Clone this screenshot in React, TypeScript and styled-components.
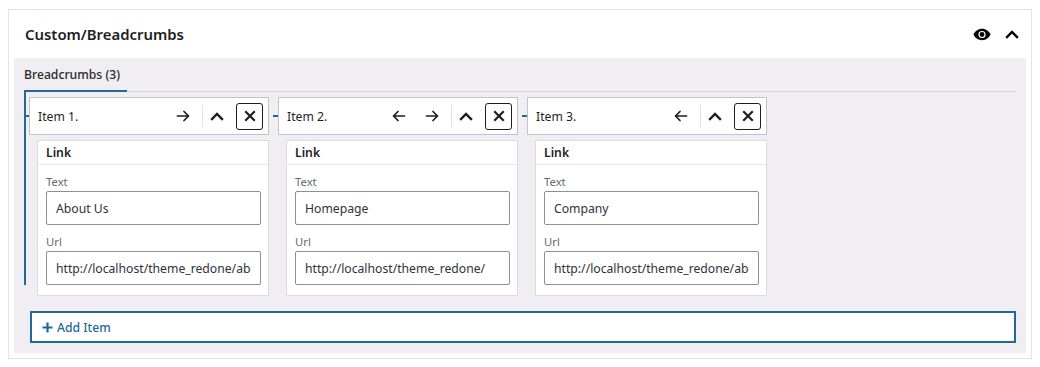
import React from "react";
import styled, { createGlobalStyle } from "styled-components";

const GlobalStyle = createGlobalStyle`
  html, body { margin: 0; padding: 0; background: #ffffff; }
  body { font-family: "Noto Sans", "Open Sans", sans-serif; color: #1e1e1e; }
  * { box-sizing: border-box; }
`;

const BLUE = "#1f6a96";

const Page = styled.div`
  padding: 9px 8px 0 8px;
  width: 1040px;
`;

const Card = styled.section`
  width: 1024px;
  height: 350px;
  border: 1px solid #e4e4e7;
  background: #fff;
  display: flex;
  flex-direction: column;
`;

const CardHeader = styled.header`
  height: 48px;
  display: flex;
  align-items: center;
  padding: 0 12px 0 16px;
`;

const Title = styled.h2`
  margin: 0;
  flex: 1;
  font-size: 14.9px;
  font-weight: 600;
  color: #1e1e1e;
`;

const HeaderTools = styled.div`
  display: flex;
  align-items: center;
  gap: 14px;
  color: #000;
`;

const Panel = styled.div`
  flex: 1;
  margin: 0 5px 5px 5px;
  background: #f0edf3;
  padding: 0 10px 10px 10px;
  display: flex;
  flex-direction: column;
`;

const TabBar = styled.div`
  display: flex;
  border-bottom: 1px solid #d6d3da;
  height: 34px;
`;

const Tab = styled.div<{ $active?: boolean }>`
  width: 103px;
  font-size: 12.2px;
  font-weight: 500;
  color: #2c2c2c;
  display: flex;
  align-items: center;
  border-bottom: 2px solid ${(p) => (p.$active ? BLUE : "transparent")};
  margin-bottom: -1px;
`;

const ItemsRow = styled.div`
  position: relative;
  display: flex;
  gap: 4px;
  padding-top: 5px;
  &::before {
    content: "";
    position: absolute;
    left: 0;
    top: 0;
    width: 2px;
    bottom: 11px;
    background: ${BLUE};
  }
`;

const ItemColumn = styled.div`
  width: 245px;
  display: flex;
  flex-direction: column;
  gap: 5px;
`;

const ItemHeaderRow = styled.div`
  display: flex;
  align-items: center;
`;

const Connector = styled.span`
  width: 5px;
  height: 2px;
  background: ${BLUE};
  flex: none;
`;

const ItemHeader = styled.div`
  flex: 1;
  height: 38px;
  background: #fff;
  border: 1px solid #c3c4c7;
  display: flex;
  align-items: center;
  padding: 0 5px 0 8px;
`;

const ItemTitle = styled.span`
  flex: 1;
  font-size: 12.2px;
  color: #1e1e1e;
`;

const Actions = styled.div`
  display: flex;
  align-items: center;
  gap: 5px;
`;

const IconButton = styled.button<{ $boxed?: boolean }>`
  width: ${(p) => (p.$boxed ? "27px" : "28px")};
  height: 27px;
  padding: 0;
  display: flex;
  align-items: center;
  justify-content: center;
  background: #fff;
  color: #1e1e1e;
  border: ${(p) => (p.$boxed ? "1px solid #1e1e1e" : "none")};
  border-radius: 3px;
  cursor: pointer;
`;

const Sep = styled.span`
  width: 1px;
  height: 22px;
  margin-right: -5px;
  background: #e2e2e2;
`;

const ItemBody = styled.div`
  margin-left: 13px;
  background: #fff;
  border: 1px solid #dcdcde;
  display: flex;
  flex-direction: column;
`;

const BodyTitle = styled.div`
  height: 24px;
  padding: 0 8px;
  display: flex;
  align-items: center;
  font-size: 12.2px;
  font-weight: 600;
  color: #1e1e1e;
  border-bottom: 1px solid #e6e6e6;
`;

const Fields = styled.div`
  padding: 8px 7px 10px 8px;
  display: flex;
  flex-direction: column;
`;

const Label = styled.label`
  font-size: 11.3px;
  color: #6a6a6a;
  line-height: 17px;
  margin-bottom: 1px;
`;

const Input = styled.input`
  height: 34px;
  width: 100%;
  border: 1px solid #8c8f94;
  border-radius: 2px;
  padding: 0 9px;
  font-family: inherit;
  font-size: 12.2px;
  color: #2c3338;
  background: #fff;
  outline: none;
  margin: 0 0 8px 0;
  &:last-child { margin-bottom: 0; }
`;

const AddButton = styled.button`
  margin: 15px 0 0 6px;
  height: 32px;
  border: 2px solid ${BLUE};
  background: #fff;
  color: ${BLUE};
  font-family: inherit;
  font-size: 12.2px;
  font-weight: 500;
  display: flex;
  align-items: center;
  gap: 4px;
  padding: 0 10px;
  cursor: pointer;
`;

const ArrowRight = () => (
  <svg width="14" height="14" viewBox="0 0 14 14" fill="none" stroke="currentColor" strokeWidth="1.7" strokeLinecap="round" strokeLinejoin="round">
    <path d="M1.5 7h11M8 2.5 12.5 7 8 11.5" />
  </svg>
);
const ArrowLeft = () => (
  <svg width="14" height="14" viewBox="0 0 14 14" fill="none" stroke="currentColor" strokeWidth="1.7" strokeLinecap="round" strokeLinejoin="round">
    <path d="M12.5 7h-11M6 2.5 1.5 7 6 11.5" />
  </svg>
);
const ChevronUp = () => (
  <svg width="14" height="10" viewBox="0 0 14 10" fill="none" stroke="currentColor" strokeWidth="2.4" strokeLinecap="square">
    <path d="M2 8 7 3l5 5" />
  </svg>
);
const Close = () => (
  <svg width="12" height="12" viewBox="0 0 12 12" fill="none" stroke="currentColor" strokeWidth="2.2" strokeLinecap="square">
    <path d="M2 2l8 8M10 2 2 10" />
  </svg>
);
const Eye = () => (
  <svg width="18" height="13" viewBox="0 0 18 13">
    <path d="M9 0.8C5 0.8 1.8 3.4 0.6 6.5 1.8 9.6 5 12.2 9 12.2s7.2-2.6 8.4-5.7C16.2 3.4 13 0.8 9 0.8z" fill="#000" />
    <circle cx="9" cy="6.5" r="3.6" fill="#fff" />
    <circle cx="9" cy="6.5" r="2.4" fill="#000" />
  </svg>
);
const Plus = () => (
  <svg width="11" height="11" viewBox="0 0 11 11" fill="none" stroke="currentColor" strokeWidth="2.2">
    <path d="M5.5 0.5v10M0.5 5.5h10" />
  </svg>
);

type Item = { title: string; text: string; url: string; left: boolean; right: boolean };

const items: Item[] = [
  { title: "Item 1.", text: "About Us", url: "http://localhost/theme_redone/about-us/", left: false, right: true },
  { title: "Item 2.", text: "Homepage", url: "http://localhost/theme_redone/", left: true, right: true },
  { title: "Item 3.", text: "Company", url: "http://localhost/theme_redone/about-us/company/", left: true, right: false },
];

export default function App() {
  return (
    <>
      <GlobalStyle />
      <Page>
        <Card>
          <CardHeader>
            <Title>Custom/Breadcrumbs</Title>
            <HeaderTools>
              <Eye />
              <ChevronUp />
            </HeaderTools>
          </CardHeader>
          <Panel>
            <TabBar>
              <Tab $active>Breadcrumbs (3)</Tab>
            </TabBar>
            <ItemsRow>
              {items.map((it) => (
                <ItemColumn key={it.title}>
                  <ItemHeaderRow>
                    <Connector />
                    <ItemHeader>
                      <ItemTitle>{it.title}</ItemTitle>
                      <Actions>
                        {it.left && (
                          <IconButton aria-label="Move left"><ArrowLeft /></IconButton>
                        )}
                        {it.right && (
                          <IconButton aria-label="Move right"><ArrowRight /></IconButton>
                        )}
                        <Sep />
                        <IconButton aria-label="Collapse"><ChevronUp /></IconButton>
                        <IconButton $boxed aria-label="Remove"><Close /></IconButton>
                      </Actions>
                    </ItemHeader>
                  </ItemHeaderRow>
                  <ItemBody>
                    <BodyTitle>Link</BodyTitle>
                    <Fields>
                      <Label>Text</Label>
                      <Input readOnly value={it.text} />
                      <Label>Url</Label>
                      <Input readOnly value={it.url} />
                    </Fields>
                  </ItemBody>
                </ItemColumn>
              ))}
            </ItemsRow>
            <AddButton><Plus />Add Item</AddButton>
          </Panel>
        </Card>
      </Page>
    </>
  );
}
